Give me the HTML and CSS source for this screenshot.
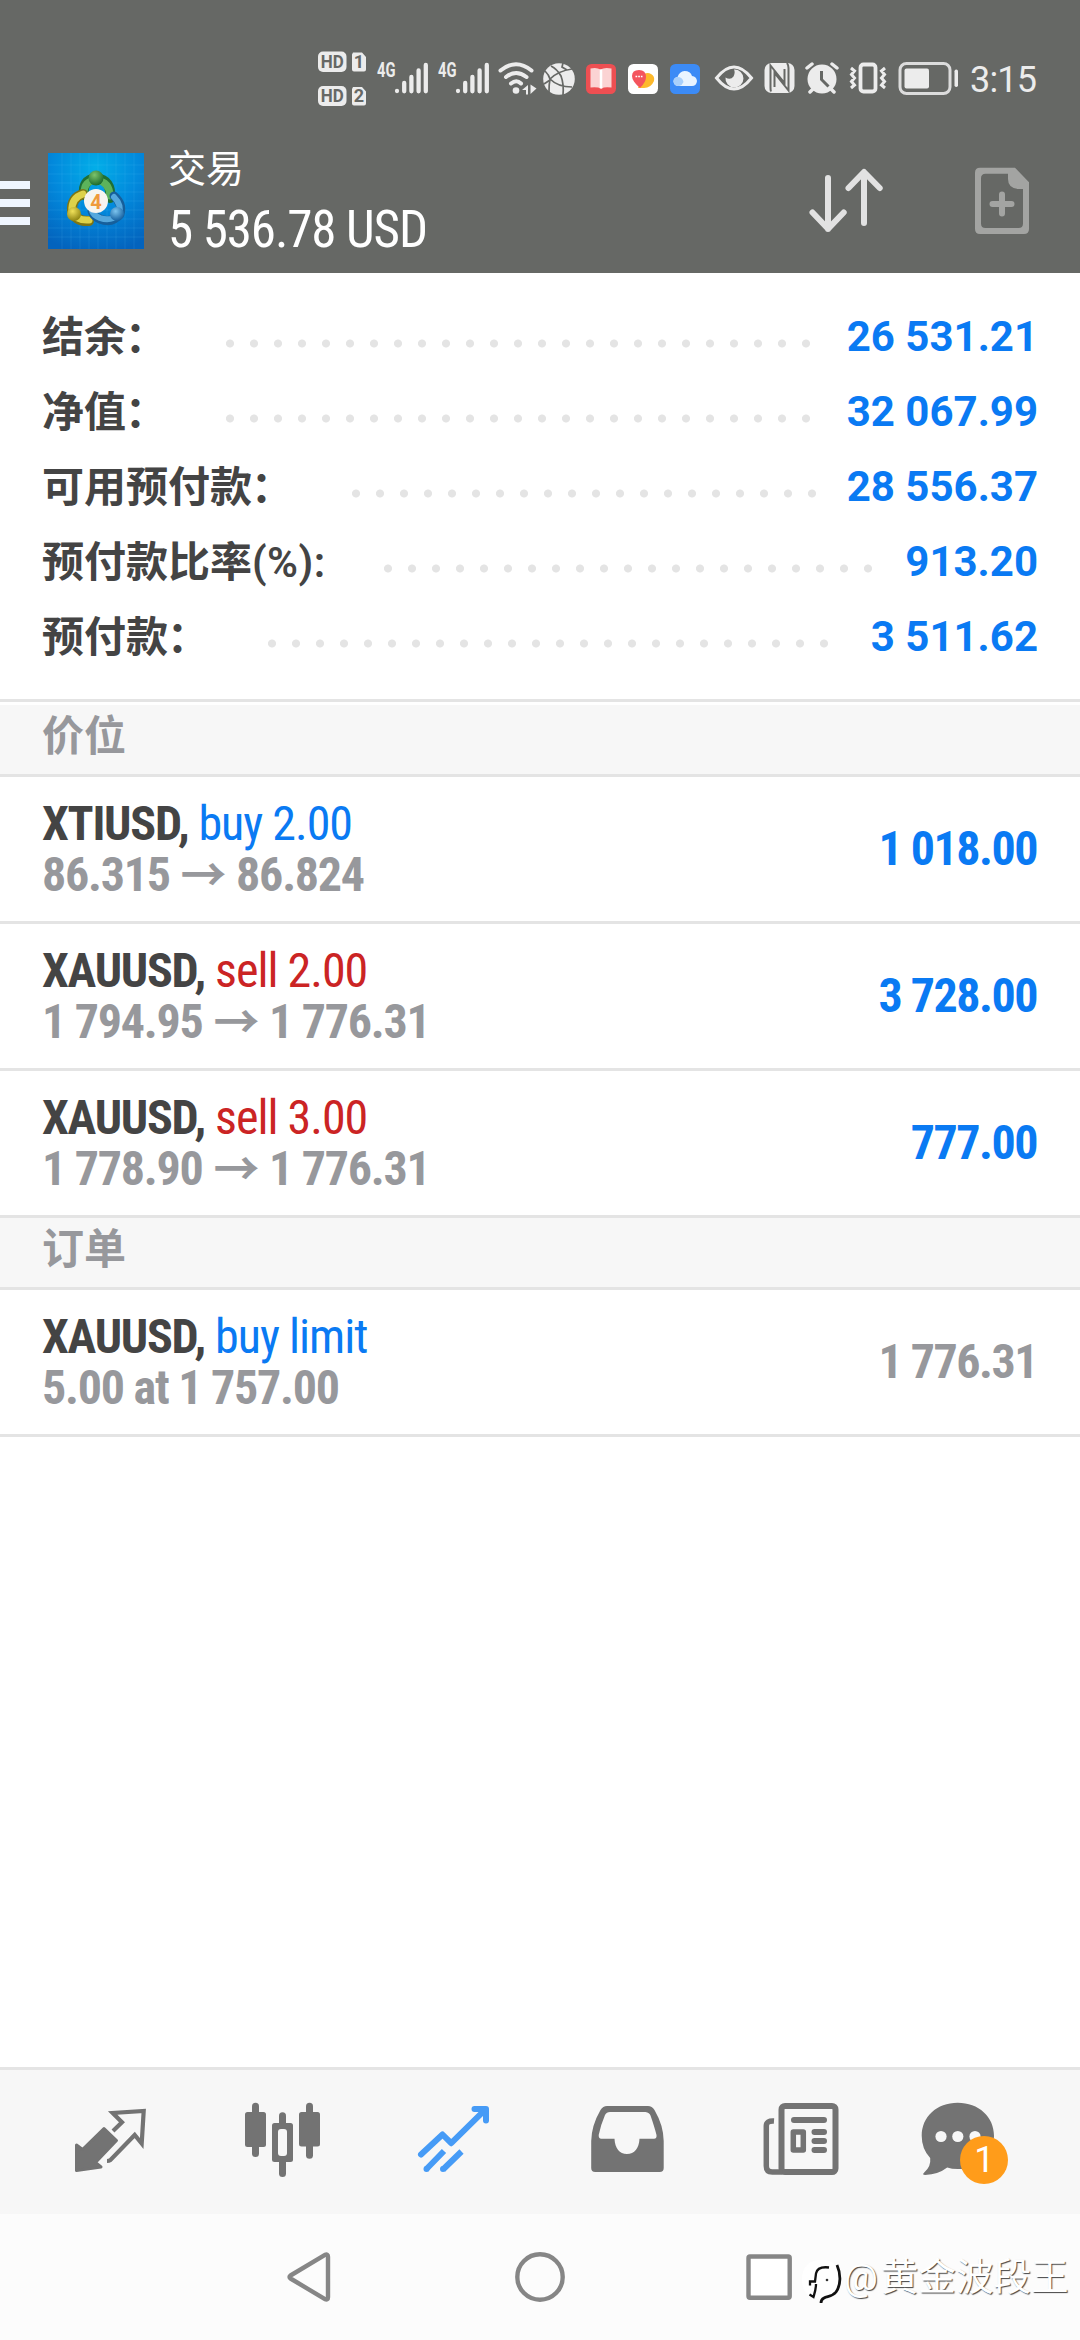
FILE: index.html
```html
<!DOCTYPE html>
<html lang="zh-CN">
<head>
<meta charset="utf-8">
<title>交易</title>
<link rel="stylesheet" href="styles.css">
</head>
<body>
<div class="screen">
  <div class="status">
    <svg class="s-hd" width="50" height="60" viewBox="317 48 50 60"><g fill="#ececec"><rect x="318" y="51.5" width="28.500" height="20.500" rx="5"/><rect x="318" y="86" width="28.500" height="20" rx="5"/><path d="M353 52.500h9l4 4.500v12.500q0 2-2 2h-10q-2 0-2-2v-15zM353 87h9l4 4.500v12q0 2-2 2h-10q-2 0-2-2v-14.500z"/></g><g class="hd-text"><text x="332.300" y="68.200" textLength="23" lengthAdjust="spacingAndGlyphs">HD</text><text x="359" y="68.200">1</text><text x="332.300" y="102.200" textLength="23" lengthAdjust="spacingAndGlyphs">HD</text><text x="359" y="102.200">2</text></g></svg>
    <svg class="s-sig" width="54" height="60" viewBox="375 48 54 60"><text class="g4" x="377" y="76.500" textLength="18.500" lengthAdjust="spacingAndGlyphs">4G</text><path class="bars" d="M397 91v0M404.200 83v8.300M411.400 77v14.300M418.600 70.500v20.800M425.800 65v26.300"/></svg>
    <svg class="s-sig2" width="54" height="60" viewBox="375 48 54 60"><text class="g4" x="377" y="76.500" textLength="18.500" lengthAdjust="spacingAndGlyphs">4G</text><path class="bars" d="M397 91v0M404.200 83v8.300M411.400 77v14.300M418.600 70.500v20.800M425.800 65v26.300"/></svg>
    <svg class="s-wifi" width="40" height="60" viewBox="497 48 40 60"><g fill="none" stroke="#ececec" stroke-width="4" stroke-linecap="round"><path d="M500.500 70.500q15.500-12.500 31 0M506 77q10-8 20.500 0M511 83.500q5.500-4.500 10 0"/></g><circle cx="516" cy="90.500" r="3.300" fill="#ececec"/><path fill="#ececec" d="M528 85v9.500h-2v-4.500h-4zM530.500 94v-9.500l6 4z"/></svg>
    <svg class="s-ball" width="34" height="60" viewBox="542 48 34 60"><circle cx="559" cy="79" r="15.800" fill="#ececec"/><g fill="none" stroke="#666865" stroke-width="1.700"><path d="M551 66q6 3 10 10 3 8 2 19M545 71q4 4 5 8 8 8 22 8M549 92q0-8 1-13 8-8 22-10M563 63l-1 4 5 3M544 84l6-4"/></g></svg>
    <svg class="s-book" width="30" height="60" viewBox="586 48 30 60"><rect x="586" y="64" width="30" height="30" rx="5.500" fill="#ee4f52"/><path d="M590.500 68.500q6-1.500 10 1 4-2.500 11-1v19q-7-1-10 1-5-2-11-1z" fill="#fbd3d3"/><path d="M601 69.500v19" stroke="#fff" stroke-width="2.500"/></svg>
    <svg class="s-heart" width="30" height="60" viewBox="628 48 30 60"><rect x="628" y="64" width="30" height="30" rx="5.500" fill="#fff"/><path d="M638 88l6-14q4-2 7 0 4 2 3 7-3 7-10 7z" fill="#fdb92c"/><path d="M640 88q-8-7-8-12 0-6 7-6 7 0 7 7 0 5-6 11z" fill="#f4555e"/><path d="M635.500 76.500h7" stroke="#fff" stroke-width="1.500" stroke-dasharray="1.700 1"/></svg>
    <svg class="s-cloud" width="30" height="60" viewBox="670 48 30 60"><rect x="670" y="64" width="30" height="30" rx="5.500" fill="#3c8bf6"/><path d="M679 86q-5 0-5.500-4.500 0-4 4-4.500 2-5.500 7-6 6 0 7.500 5 4.500.500 5 5-.5 5-5 5z" fill="#e9f4ff"/><path d="M679 86q-5 0-5.500-4.500 0-4 4-4.500 5 0 6 5-1 3-4.500 4z" fill="#a9d0fb"/></svg>
    <svg class="s-eye" width="40" height="60" viewBox="714 48 40 60"><path d="M716.500 78q17.500-22 35 0-17.500 22-35 0z" fill="none" stroke="#ececec" stroke-width="3"/><path d="M734 69.500a9 9 0 1 1-8.500 8q5 3 8-1 2-4 .5-7z" fill="#ececec"/></svg>
    <svg class="s-nfc" width="32" height="60" viewBox="764 48 32 60"><rect x="764.500" y="63" width="30" height="30" rx="7" fill="#ececec"/><path d="M771 91.500q-.5-1.500-.5-4V65.500L784.500 83V69M774.500 87V73L788.500 90.500V68q0-3-1.500-5" fill="none" stroke="#666865" stroke-width="2"/></svg>
    <svg class="s-alarm" width="34" height="60" viewBox="805 48 34 60"><circle cx="822" cy="79" r="14.500" fill="#ececec"/><path d="M807 68l5-4M837 68l-5-4M810 92l4-4M834 92l-4-4" stroke="#ececec" stroke-width="3.500" stroke-linecap="round"/><path d="M821.500 71v8.500l7 7" fill="none" stroke="#666865" stroke-width="3"/></svg>
    <svg class="s-vib" width="40" height="60" viewBox="848 48 40 60"><g fill="none" stroke="#ececec"><rect x="860.500" y="64.500" width="15" height="27" rx="3" stroke-width="3.800"/><path d="M851 68l3.500 3-3 3.500 3 3.500-3 3.500 3 3.500-3.500 3M885 68l-3.500 3 3 3.500-3 3.500 3 3.500-3 3.500 3.500 3" stroke-width="3"/></g></svg>
    <svg class="s-bat" width="62" height="60" viewBox="898 48 62 60"><rect x="900" y="63.500" width="50" height="30" rx="6.500" fill="none" stroke="#dcdcdc" stroke-width="3"/><rect x="904.500" y="68.500" width="24.500" height="20" rx="2" fill="#ececec"/><rect x="954.500" y="69.500" width="3.500" height="17.500" rx="1.700" fill="#ececec"/></svg>
    <span class="clock">3:15</span>
  </div>

  <header class="header">
    <div class="burger"><i></i><i></i><i></i></div>
    <svg class="logo" width="96" height="96" viewBox="0 0 96 96">
      <defs>
        <radialGradient id="bg" cx=".5" cy=".15" r=".9"><stop offset="0" stop-color="#02aee8"/><stop offset=".5" stop-color="#0289dc"/><stop offset="1" stop-color="#0363bd"/></radialGradient>
        <radialGradient id="gr" cx=".4" cy=".3" r=".7"><stop offset="0" stop-color="#7cc36b"/><stop offset="1" stop-color="#1c6b2c"/></radialGradient>
        <radialGradient id="ye" cx=".4" cy=".3" r=".7"><stop offset="0" stop-color="#f0e15a"/><stop offset="1" stop-color="#8f8412"/></radialGradient>
        <radialGradient id="bl" cx=".4" cy=".3" r=".7"><stop offset="0" stop-color="#7cc4ee"/><stop offset="1" stop-color="#1560a0"/></radialGradient>
      </defs>
      <rect width="96" height="96" fill="url(#bg)"/>
      <path d="M14 0v96M23 0v96M32 0v96M41 0v96M50 0v96M59 0v96M68 0v96M77 0v96M86 0v96M0 12h96M0 21h96M0 30h96M0 39h96M0 48h96M0 57h96M0 66h96M0 75h96M0 84h96" stroke="#6fcaf5" stroke-opacity=".13"/>
      <g fill="none" stroke-linecap="round">
        <path d="M36 42q-2-15 12-17 16 2 14 20" stroke="#1f6f34" stroke-width="10"/><path d="M36 40q0-12 12-13 14 2 14 16" stroke="#5cb35b" stroke-width="7"/>
        <path d="M35 41q-12 4-11 17 4 11 17 10" stroke="#7d7514" stroke-width="10"/><path d="M35 41q-12 4-11 17 4 10 17 9" stroke="#ddd249" stroke-width="7"/>
        <path d="M66 43q9 8 6 18-8 10-20 5-7-3-8-8" stroke="#165f9b" stroke-width="9"/><path d="M66 44q8 8 5 17-8 8-19 4-7-3-8-7" stroke="#55a8dd" stroke-width="6"/>
      </g>
      <circle cx="48" cy="25" r="7.500" fill="url(#gr)"/><circle cx="26" cy="61" r="7" fill="url(#ye)"/><circle cx="69" cy="61" r="7" fill="url(#bl)"/>
      <circle cx="48" cy="48" r="12" fill="#f6f4f0"/>
      <text class="logo-num" x="48" y="55.500">4</text>
    </svg>
    <div class="title">
      <div class="t1">交易</div>
      <div class="t2"><span class="cond">5 536.78 USD</span></div>
    </div>
    <svg class="sort" width="76" height="70" viewBox="808 165 76 70" fill="none" stroke="#e2e2e2" stroke-width="6" stroke-linecap="round" stroke-linejoin="round"><path d="M828 178v51M812.500 212.500L828 228.800l15.700-16.300M864 223v-50M848.500 188L864 172l15.700 16"/></svg>
    <svg class="neworder" width="56" height="68" viewBox="974 167 56 68"><path fill="#a3a4a2" fill-rule="evenodd" d="M980 167.700h35l14 14.500v46.800q0 5-5 5h-44q-5 0-5-5v-56.300q0-5 5-5zM985.500 173.700q-4.500 0-4.500 4.500v45.300q0 4.500 4.500 4.500h33q4.500 0 4.500-4.500v-34.500h-5q-10-1-10-10v-5.300z"/><path d="M1002 194.500v19M992.500 204h19" stroke="#a3a4a2" stroke-width="6" stroke-linecap="round"/></svg>
  </header>

  <main class="content">
    <section class="summary">
      <div class="sum"><span class="lab">结余<span class="colon">：</span></span><span class="dots" style="--n:25"></span><span class="val">26 531.21</span></div>
      <div class="sum"><span class="lab">净值<span class="colon">：</span></span><span class="dots" style="--n:25"></span><span class="val">32 067.99</span></div>
      <div class="sum"><span class="lab">可用预付款<span class="colon">：</span></span><span class="dots" style="--n:20"></span><span class="val">28 556.37</span></div>
      <div class="sum"><span class="lab">预付款比率<b class="pct">(%):</b></span><span class="dots" style="--n:21"></span><span class="val">913.20</span></div>
      <div class="sum"><span class="lab">预付款<span class="colon">：</span></span><span class="dots" style="--n:24"></span><span class="val">3 511.62</span></div>
    </section>
    <h2 class="section first">价位</h2>
    <div class="row"><div class="info"><div class="l1 cond"><b>XTIUSD,</b> <span class="buy">buy 2.00</span></div><div class="l2 cond">86.315 <span class="arr">→</span> 86.824</div></div><div class="profit cond">1 018.00</div></div>
    <div class="row"><div class="info"><div class="l1 cond"><b>XAUUSD,</b> <span class="sell">sell 2.00</span></div><div class="l2 cond">1 794.95 <span class="arr">→</span> 1 776.31</div></div><div class="profit cond">3 728.00</div></div>
    <div class="row"><div class="info"><div class="l1 cond"><b>XAUUSD,</b> <span class="sell">sell 3.00</span></div><div class="l2 cond">1 778.90 <span class="arr">→</span> 1 776.31</div></div><div class="profit cond">777.00</div></div>
    <h2 class="section">订单</h2>
    <div class="row"><div class="info"><div class="l1 cond"><b>XAUUSD,</b> <span class="buy">buy limit</span></div><div class="l2 cond">5.00 at 1 757.00</div></div><div class="profit price cond">1 776.31</div></div>
  </main>

  <nav class="tabs">
    <div class="tab"><svg width="100" height="144" viewBox="58 2070 100 144"><path d="M75.500 2145l6 4.500 21.500-21 12.500 12-21 22 5.500 4.500-24.500 3.500z" fill="#737373" stroke="#737373" stroke-width="3" stroke-linejoin="round"/><path d="M112 2131l9-8.700-9.300-9.300 31-2-2 32.500-7-8.500-24.200 25q-1.500 1-3.500 1" fill="none" stroke="#737373" stroke-width="4.200" stroke-linejoin="miter"/></svg></div>
    <div class="tab"><svg width="100" height="144" viewBox="231 2070 100 144" fill="#737373"><rect x="244" y="2112" width="21" height="35" rx="2.500"/><rect x="251" y="2102.700" width="7" height="54.300" rx="3.500"/><rect x="298" y="2112" width="21" height="34.500" rx="2.500"/><rect x="305" y="2102.700" width="7" height="56" rx="3.500"/><rect x="278" y="2112.300" width="7" height="64.700" rx="3.500"/><rect x="271" y="2123" width="21" height="39" rx="2.500"/><rect x="277" y="2129" width="9" height="27" rx="3" fill="#f7f7f7"/></svg></div>
    <div class="tab"><svg width="100" height="144" viewBox="404 2070 100 144" fill="none" stroke="#469bf6" stroke-width="6" stroke-linejoin="round"><g stroke-linecap="round"><path d="M421 2154.500l21.500-20 8.700 8.700 34-33.500M474.500 2109H486v11.500M426.500 2169l0 0M443 2169l0 0"/></g><path d="M426 2169.500l18-18.500M443 2169.500l18.500-18"/></svg></div>
    <div class="tab"><svg width="100" height="144" viewBox="576 2070 100 144"><path fill="#737373" fill-rule="evenodd" d="M606 2106h41q4 0 6.500 4 9 15.500 9.200 31v27q0 4-4 4h-64.500q-4 0-4-4v-27q.3-15.500 9.300-31 2.500-4 6.500-4zM609 2112q-3.500 0-5 3-4.500 10.500-6.300 20-.2 3.700 2.500 3.700h13.300c.5 9.500 5 15.300 12.500 15.300s12-5.800 12.500-15.300h14.500q3 0 2.500-3.700-2-8-6-19.500-1-3-5-3.500z"/></svg></div>
    <div class="tab"><svg width="100" height="144" viewBox="749 2070 100 144" fill="none" stroke="#737373"><rect x="780.500" y="2105.900" width="54" height="66.200" rx="3.500" stroke-width="6"/><path d="M773 2121q-7.700-.5-7.700 5v40q0 6 6 6h10" stroke-width="5.500"/><path d="M793 2120h30M813.500 2132h9.500M813.500 2141h9.500M813.500 2150h9.500" stroke-width="6" stroke-linecap="round"/><rect x="792.300" y="2132" width="10" height="18" stroke-width="5.500" stroke-linejoin="round"/></svg></div>
    <div class="tab"><svg width="110" height="144" viewBox="917 2070 110 144"><path d="M957.700 2102.700c21 0 36.300 14 36.300 33 0 20-16 33.300-36.300 33.300q-6 0-10.500-1.500-9 7-22 7.500-3.500 0-1-2.500 7-6 6-14.500-8.500-9-8.500-22.300c0-19 15-33 36-33z" fill="#737373"/><g fill="#f7f7f7"><circle cx="941" cy="2136.500" r="5.600"/><circle cx="957.800" cy="2136.500" r="5.600"/><circle cx="975" cy="2136.500" r="5.600"/></g></svg><span class="badge">1</span></div>
  </nav>

  <footer class="sysnav">
    <svg class="back" width="50" height="60" viewBox="284 2246 50 60" fill="none" stroke="#868686" stroke-width="4.400" stroke-linejoin="round"><path d="M325 2254.800q3-1 3 2v40.400q0 3-3 2L290.500 2278.500q-2-1.500 0-3z"/></svg>
    <svg class="home" width="60" height="60" viewBox="510 2246 60 60" fill="none" stroke="#868686" stroke-width="4.400"><circle cx="540" cy="2277" r="22.700"/></svg>
    <svg class="recent" width="50" height="60" viewBox="744 2246 50 60" fill="#fff" stroke="#868686" stroke-width="4.400"><rect x="748.500" y="2256.500" width="41.200" height="41.200" rx="1.500"/></svg>
    <div class="mark"><svg width="42" height="50" viewBox="800 2256 42 50"><path d="M821 2260c14 0 18 7 18 18 0 12-5 18-12 19-4 1-6 2-6 6-2-3-2-4-6-5-9-2-13-8-13-19s6-19 19-19z" fill="#fff"/><g fill="none" stroke="#111"><path d="M837 2265c4 9 4 20-1 27-4 5-9 4-12 6-2 1-3 3-3 5" stroke-width="2.800"/><path d="M829 2267.500c-8-1-12 1-13 6l-1 8h-5v4M816 2284c0 5-1 8-2.500 13l-4-2.500" stroke-width="2.300"/></g><circle cx="827" cy="2280" r="1.300" fill="#333"/></svg><span class="at">@</span><span>黄金波段王</span></div>
  </footer>
</div>
</body>
</html>
```
FILE: styles.css
```css
* { box-sizing: border-box; }
body { margin: 0; background: #fff; font-family: Roboto, "Noto Sans CJK SC", sans-serif; }
.screen { width: 1080px; height: 2340px; display: flex; flex-direction: column; overflow: hidden; }
svg { display: block; flex: none; }
b { font-weight: 700; }
.cond { font-family: "Roboto Condensed", Roboto, "Noto Sans CJK SC", sans-serif; font-stretch: 75%; white-space: pre; }

.status { height: 135px; flex: none; background: #666865; display: flex; align-items: flex-start; padding: 48px 0 0 317px; }
.s-sig { margin-left: 8px; }
.s-sig2 { margin-left: 7px; }
.s-wifi { margin-left: 7px; }
.s-ball { margin-left: 5px; }
.s-book { margin-left: 10px; }
.s-heart, .s-cloud { margin-left: 12px; }
.s-eye { margin-left: 14px; }
.s-nfc { margin-left: 10px; }
.s-alarm { margin-left: 9px; }
.s-vib { margin-left: 9px; }
.s-bat { margin-left: 10px; }
.hd-text { font: 700 18px Roboto, sans-serif; fill: #666865; text-anchor: middle; }
.g4 { font: 700 19.5px Roboto, sans-serif; fill: #ececec; }
.bars { fill: none; stroke: #ececec; stroke-width: 4.3px; stroke-linecap: round; }
.clock { margin: 10px 0 0 10px; font-size: 36px; line-height: 44px; color: #ececec; letter-spacing: -0.8px; }

.header { height: 138px; flex: none; background: #666865; display: flex; align-items: flex-start; color: #fff; }
.burger { width: 48px; padding-top: 46px; display: flex; flex-direction: column; gap: 10px; }
.burger i { width: 30px; height: 8px; background: #eff6ff; }
.logo { margin-top: 18px; }
.logo-num { font: 700 20px Roboto, sans-serif; fill: #ef9a3c; text-anchor: middle; }
.title { margin-left: 25px; width: 639px; padding-top: 10px; }
.t1 { font-size: 38px; line-height: 49px; margin-left: -1px; }
.t2 { font-size: 51px; line-height: 71px; letter-spacing: -1.1px; margin-left: -1px; }
.sort { margin-top: 30px; }
.neworder { margin: 32px 0 0 90px; }

.content { flex: 1; }
.summary { height: 429px; padding: 26px 42px 0 42px; border-bottom: 3px solid #e4e4e4; }
.sum { height: 75px; display: flex; align-items: flex-start; line-height: 75px; font-size: 42px; font-weight: 700; }
.lab { color: #444; white-space: nowrap; font-family: "Noto Sans CJK SC", sans-serif; line-height: 70px; }
.colon { margin: 0 1px 0 -1px; }
.pct { font-family: Roboto, sans-serif; font-weight: 600; letter-spacing: 0.5px; }
.dots { width: calc(var(--n) * 24px); height: 75px; margin-left: 50px; background: radial-gradient(circle at center, #e4e4e4 3.600px, transparent 4.400px) 0 7px / 24px 75px repeat-x; }
.val { margin-left: auto; color: #0a7af3; white-space: nowrap; }

.section { margin: 0; height: 72px; background: #f7f7f7; border-bottom: 3px solid #e4e4e4; padding-left: 42px; font-size: 42px; line-height: 63px; font-weight: 700; color: #97989c; }
.section.first { border-top: 3px solid #fff; height: 75px; }
.row { height: 147px; border-bottom: 3px solid #e4e4e4; padding: 21px 43px 0 42px; display: flex; justify-content: space-between; font-size: 48px; line-height: 51px; color: #97989c; }
.info { display: flex; flex-direction: column; }
.l1 { letter-spacing: -1px; }
.l1 b { color: #444; letter-spacing: -1.25px; }
.l2, .profit { font-weight: 700; }
.l2 { letter-spacing: -1.25px; }
.buy { color: #0a7af3; }
.sell { color: #cb2424; }
.arr { font-family: "Noto Sans CJK SC", sans-serif; font-size: 46px; line-height: 1px; margin: 0 1px; }
.profit { color: #0a7af3; padding-top: 25px; letter-spacing: -1.5px; }
.profit.price { color: #97989c; }

.tabs { height: 147px; flex: none; background: #f7f7f7; border-top: 3px solid #e4e4e4; display: flex; padding: 0 22px; }
.tab { flex: 1; display: flex; justify-content: center; position: relative; }
.tab svg { margin-left: 1px; }
.badge { position: absolute; left: 75px; top: 66px; width: 48px; height: 48px; border-radius: 50%; background: #ff9c1a; color: #fff; font-size: 36px; line-height: 49px; text-align: center; }

.sysnav { height: 126px; flex: none; background: #fcfcfc; display: flex; align-items: flex-start; padding: 32px 0 0 284px; }
.home { margin-left: 176px; }
.recent { margin-left: 174px; }
.mark { display: flex; margin: 10px 0 0 6px; }
.mark span { font-size: 37.6px; line-height: 42px; color: #fff; font-weight: 400; white-space: nowrap; text-shadow: 1px 1px 1px #444; }
.mark .at { margin: 0 3px 0 2px; }
```
